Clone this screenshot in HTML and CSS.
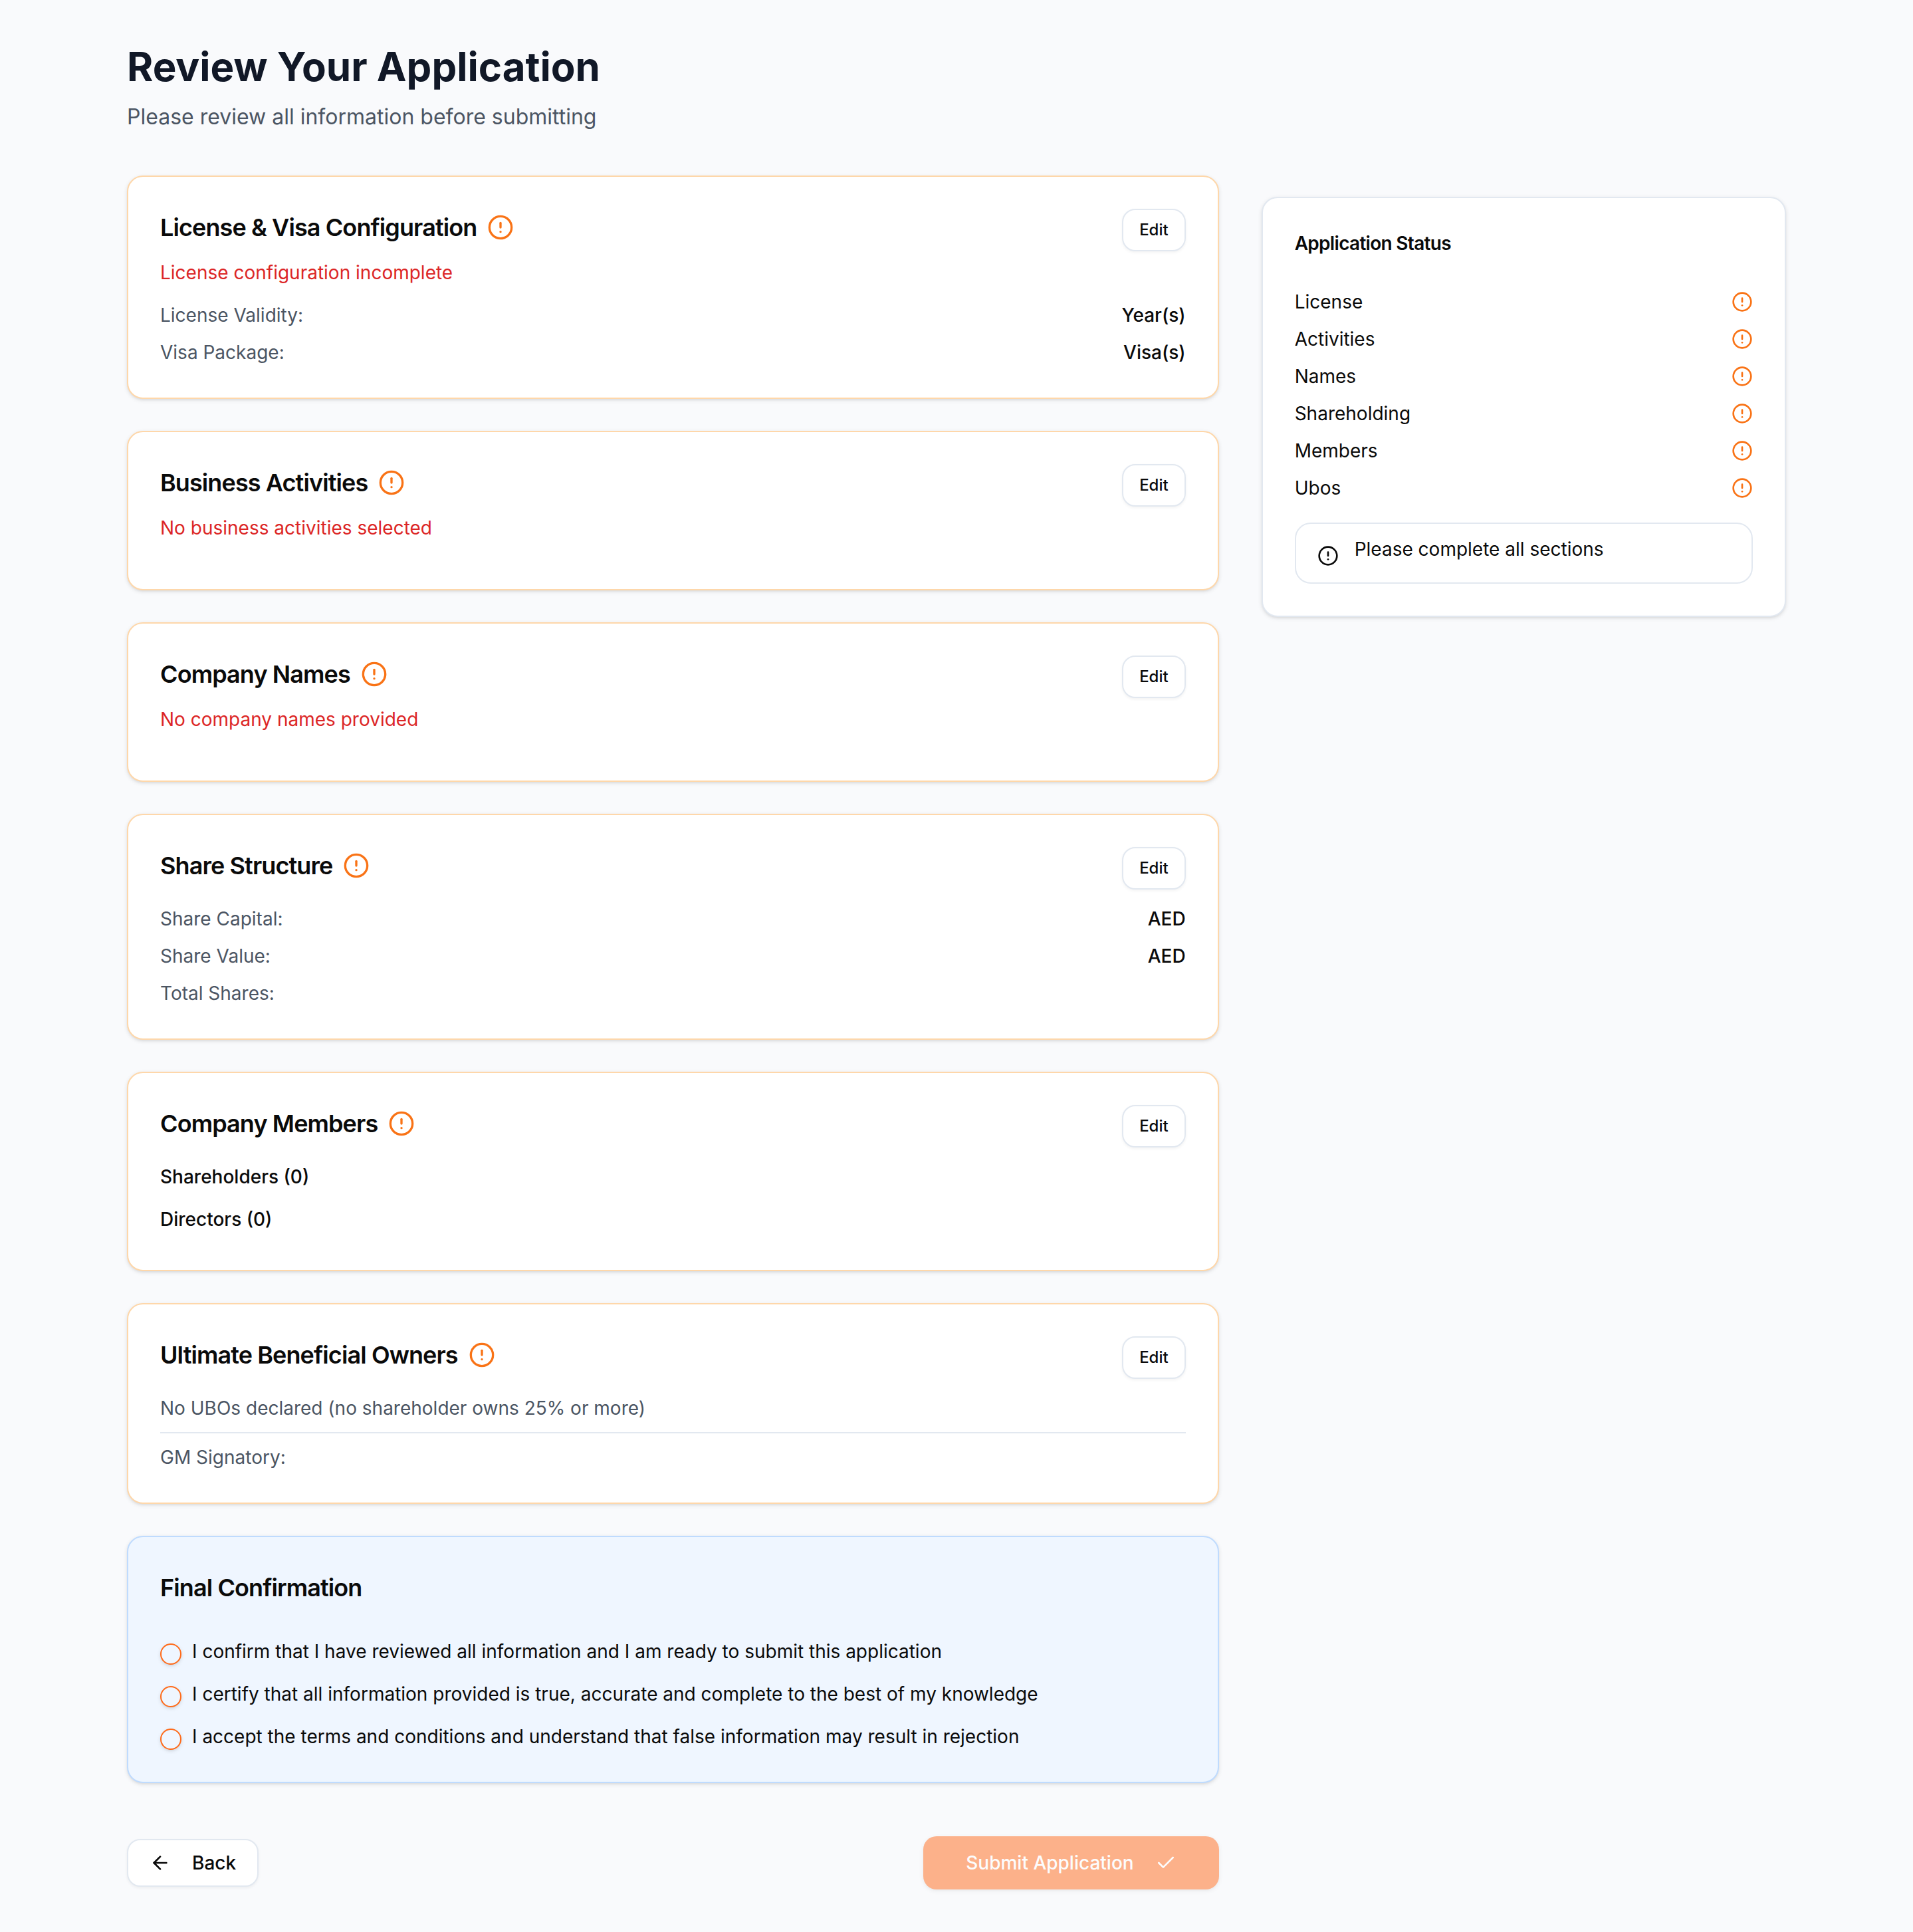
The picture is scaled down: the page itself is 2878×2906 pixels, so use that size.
FILE: index.html
```
<!DOCTYPE html>
<html lang="en">
<head>
<meta charset="utf-8">
<title>Review Your Application</title>
<link rel="stylesheet" href="styles.css">
</head>
<body>
<svg class="sprite" aria-hidden="true">
  <symbol id="alert" viewBox="0 0 24 24"><circle cx="12" cy="12" r="10"/><line x1="12" x2="12" y1="8" y2="12"/><line x1="12" x2="12.01" y1="16" y2="16"/></symbol>
  <symbol id="arrow-left" viewBox="0 0 24 24"><path d="m12 19-7-7 7-7"/><path d="M19 12H5"/></symbol>
  <symbol id="check" viewBox="0 0 24 24"><path d="M20 6 9 17l-5-5"/></symbol>
</svg>
<div class="page">
  <header class="page-header">
    <h1 class="page-title">Review Your Application</h1>
    <p class="page-subtitle">Please review all information before submitting</p>
  </header>
  <div class="layout">
    <main class="main">
      <section class="card card-warning">
        <div class="card-header">
          <h2 class="card-title">License &amp; Visa Configuration <svg class="icon icon-lg warn"><use href="#alert"/></svg></h2>
          <button class="button button-sm">Edit</button>
        </div>
        <p class="error">License configuration incomplete</p>
        <div class="rows">
          <div class="row"><span class="label">License Validity:</span><span class="value">Year(s)</span></div>
          <div class="row"><span class="label">Visa Package:</span><span class="value">Visa(s)</span></div>
        </div>
      </section>
      <section class="card card-warning">
        <div class="card-header">
          <h2 class="card-title">Business Activities <svg class="icon icon-lg warn"><use href="#alert"/></svg></h2>
          <button class="button button-sm">Edit</button>
        </div>
        <p class="error">No business activities selected</p>
        <div class="rows"></div>
      </section>
      <section class="card card-warning">
        <div class="card-header">
          <h2 class="card-title">Company Names <svg class="icon icon-lg warn"><use href="#alert"/></svg></h2>
          <button class="button button-sm">Edit</button>
        </div>
        <p class="error">No company names provided</p>
        <div class="rows"></div>
      </section>
      <section class="card card-warning">
        <div class="card-header">
          <h2 class="card-title">Share Structure <svg class="icon icon-lg warn"><use href="#alert"/></svg></h2>
          <button class="button button-sm">Edit</button>
        </div>
        <div class="rows">
          <div class="row"><span class="label">Share Capital:</span><span class="value">AED</span></div>
          <div class="row"><span class="label">Share Value:</span><span class="value">AED</span></div>
          <div class="row"><span class="label">Total Shares:</span></div>
        </div>
      </section>
      <section class="card card-warning">
        <div class="card-header">
          <h2 class="card-title">Company Members <svg class="icon icon-lg warn"><use href="#alert"/></svg></h2>
          <button class="button button-sm">Edit</button>
        </div>
        <div class="rows members">
          <h3 class="value">Shareholders (0)</h3>
          <h3 class="value">Directors (0)</h3>
        </div>
      </section>
      <section class="card card-warning">
        <div class="card-header">
          <h2 class="card-title">Ultimate Beneficial Owners <svg class="icon icon-lg warn"><use href="#alert"/></svg></h2>
          <button class="button button-sm">Edit</button>
        </div>
        <div class="rows">
          <p class="label">No UBOs declared (no shareholder owns 25% or more)</p>
          <div class="row divided"><span class="label">GM Signatory:</span></div>
        </div>
      </section>
      <section class="card card-info">
        <h2 class="card-title">Final Confirmation</h2>
        <div class="confirmations">
          <label class="confirmation"><span class="checkbox"></span>I confirm that I have reviewed all information and I am ready to submit this application</label>
          <label class="confirmation"><span class="checkbox"></span>I certify that all information provided is true, accurate and complete to the best of my knowledge</label>
          <label class="confirmation"><span class="checkbox"></span>I accept the terms and conditions and understand that false information may result in rejection</label>
        </div>
      </section>
      <footer class="actions">
        <button class="button button-back"><svg class="icon"><use href="#arrow-left"/></svg>Back</button>
        <button class="button button-submit" disabled>Submit Application<svg class="icon"><use href="#check"/></svg></button>
      </footer>
    </main>
    <aside class="card sidebar">
      <h2 class="status-title">Application Status</h2>
      <div class="status-list">
        <div class="row">License<svg class="icon warn"><use href="#alert"/></svg></div>
        <div class="row">Activities<svg class="icon warn"><use href="#alert"/></svg></div>
        <div class="row">Names<svg class="icon warn"><use href="#alert"/></svg></div>
        <div class="row">Shareholding<svg class="icon warn"><use href="#alert"/></svg></div>
        <div class="row">Members<svg class="icon warn"><use href="#alert"/></svg></div>
        <div class="row">Ubos<svg class="icon warn"><use href="#alert"/></svg></div>
      </div>
      <div class="notice"><svg class="icon"><use href="#alert"/></svg><p>Please complete all sections</p></div>
    </aside>
  </div>
</div>
</body>
</html>
```
FILE: styles.css
```
* {
  box-sizing: border-box;
  margin: 0;
}

body {
  background: #f9fafc;
  color: #0a0a0a;
  font-family: Inter, "Liberation Sans", sans-serif;
  font-size: 28px;
  line-height: 40px;
}

.sprite {
  display: none;
}

.page {
  width: 2496px;
  margin: 0 auto;
  padding: 64px 0;
}

.page-header {
  margin-bottom: 64px;
}

.page-title {
  color: #111827;
  font-size: 60px;
  font-weight: 700;
  line-height: 72px;
}

.page-subtitle {
  margin-top: 16px;
  color: #4b5563;
  font-size: 32px;
  line-height: 48px;
}

.layout {
  display: grid;
  grid-template-columns: repeat(3, 1fr);
  column-gap: 64px;
  align-items: start;
}

.main {
  grid-column: span 2;
  display: flex;
  flex-direction: column;
  gap: 48px;
}

.card {
  padding: 48px;
  border: 2px solid #e2e8f0;
  border-radius: 24px;
  background: #fff;
  box-shadow: 0 2px 6px rgba(0, 0, 0, 0.1), 0 2px 4px -2px rgba(0, 0, 0, 0.1);
}

.card-warning {
  border-color: #fed7aa;
}

.card-info {
  border-color: #bfdbfe;
  background: #eff6ff;
}

.card-header {
  display: flex;
  align-items: flex-start;
  justify-content: space-between;
}

.card-title {
  display: flex;
  align-items: center;
  gap: 16px;
  font-size: 36px;
  font-weight: 600;
  line-height: 56px;
  letter-spacing: -0.025em;
}

.icon {
  flex: none;
  width: 32px;
  height: 32px;
  fill: none;
  stroke: currentColor;
  stroke-width: 2;
  stroke-linecap: round;
  stroke-linejoin: round;
}

.icon-lg {
  width: 40px;
  height: 40px;
}

.warn {
  color: #f97316;
}

.error {
  margin-top: 12px;
  color: #dc2626;
}

.rows {
  display: flex;
  flex-direction: column;
  gap: 16px;
  margin-top: 24px;
}

.row {
  display: flex;
  align-items: center;
  justify-content: space-between;
}

.members {
  gap: 24px;
  padding-bottom: 8px;
}

.label {
  color: #4b5563;
}

.value {
  font-size: 28px;
  font-weight: 500;
}

.divided {
  padding-top: 16px;
  border-top: 2px solid #e2e8f0;
}

.confirmations {
  display: flex;
  flex-direction: column;
  gap: 24px;
  margin-top: 48px;
}

.confirmation {
  display: flex;
  align-items: flex-start;
  gap: 16px;
}

.checkbox {
  flex: none;
  width: 32px;
  height: 32px;
  margin-top: 8px;
  border: 2px solid #ff6b1a;
  border-radius: 50%;
  background: #eff6ff;
  box-shadow: 0 2px 6px rgba(0, 0, 0, 0.1), 0 2px 4px -2px rgba(0, 0, 0, 0.1);
}

.button {
  display: flex;
  align-items: center;
  justify-content: center;
  gap: 32px;
  border: 2px solid #e2e8f0;
  border-radius: 20px;
  background: #fff;
  color: inherit;
  font-family: inherit;
  font-size: 28px;
  font-weight: 500;
  line-height: 40px;
  box-shadow: 0 2px 4px rgba(0, 0, 0, 0.05);
}

.button-sm {
  height: 64px;
  padding: 0 24px;
  font-size: 24px;
  line-height: 32px;
}

.actions {
  display: flex;
  align-items: center;
  justify-content: space-between;
  margin-top: 32px;
}

.button-back {
  height: 72px;
  padding: 0 32px;
}

.button-submit {
  height: 80px;
  padding: 0 64px;
  border: 0;
  background: #ff6b1a;
  color: #fff;
  box-shadow: 0 2px 6px rgba(0, 0, 0, 0.1), 0 2px 4px -2px rgba(0, 0, 0, 0.1);
  opacity: 0.5;
}

.sidebar {
  margin-top: 32px;
}

.status-title {
  font-size: 28px;
  font-weight: 600;
  letter-spacing: -0.025em;
}

.status-list {
  display: flex;
  flex-direction: column;
  gap: 16px;
  margin-top: 48px;
}

.notice {
  display: flex;
  align-items: flex-start;
  gap: 24px;
  height: 92px;
  margin-top: 32px;
  padding: 18px 32px;
  border: 2px solid #e2e8f0;
  border-radius: 24px;
}

.notice .icon {
  margin-top: 14px;
}
```
